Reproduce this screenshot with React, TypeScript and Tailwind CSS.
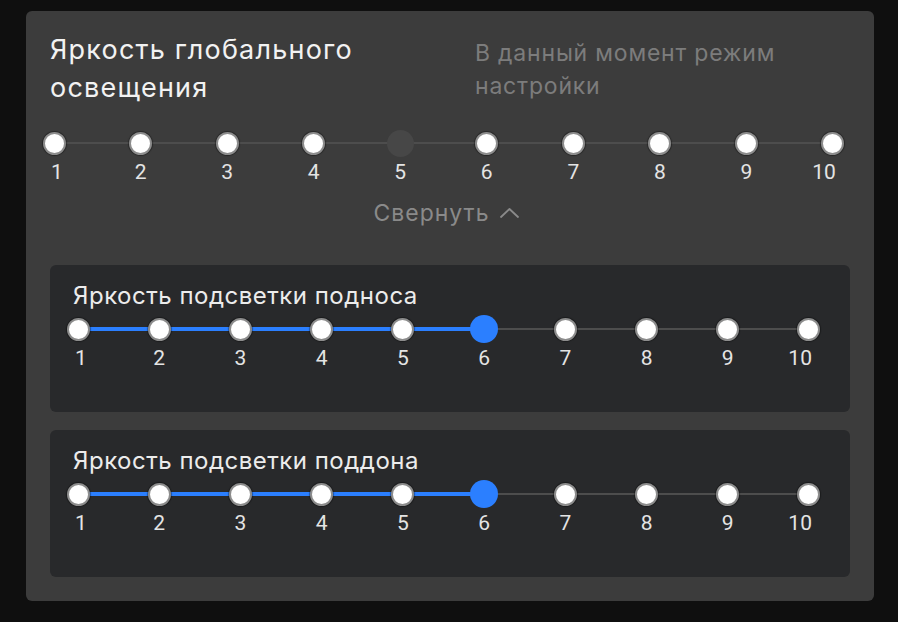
import React from "react";

const marks = [1, 2, 3, 4, 5, 6, 7, 8, 9, 10];

function Dot({ kind }: { kind: "white" | "blue" | "ghost" }) {
  if (kind === "blue")
    return <div className="h-[28px] w-[28px] shrink-0 rounded-full bg-[#2b7fff]" />;
  if (kind === "ghost")
    return <div className="h-[27px] w-[27px] shrink-0 rounded-full bg-[#474747]" />;
  return (
    <div className="h-[23px] w-[23px] shrink-0 rounded-full border-2 border-[#8c8c8c] bg-white shadow-[0_0_1px_1px_rgba(0,0,0,0.35)]" />
  );
}

function Slider({
  value,
  width,
  ml,
  variant,
}: {
  value: number;
  width: string;
  ml: string;
  variant: "top" | "card";
}) {
  const pct = ((value - 1) / 9) * 100;
  return (
    <div className={`${width} ${ml}`}>
      <div className="relative h-[28px]">
        <div className="absolute left-0 right-0 top-1/2 h-[2px] -translate-y-1/2 bg-[#4d4d4d]" />
        {variant === "card" && (
          <div
            className="absolute left-0 top-1/2 h-[4px] -translate-y-1/2 bg-[#2b7fff]"
            style={{ width: `${pct}%` }}
          />
        )}
        <div className="relative flex h-full items-center justify-between">
          {marks.map((m) => (
            <div key={m} className="flex w-0 items-center justify-center">
              <Dot kind={m === value ? (variant === "top" ? "ghost" : "blue") : "white"} />
            </div>
          ))}
        </div>
      </div>
      <div className="mt-[3px] flex justify-between">
        {marks.map((m, i) => (
          <div
            key={m}
            className={`flex w-0 ${i === 0 ? "justify-start" : i === marks.length - 1 ? "justify-end" : "justify-center"}`}
          >
            <span
              className={`whitespace-nowrap font-['Roboto',sans-serif] text-[21px] leading-[24px] text-[#e4e4e4] ${
                i === 0 ? "-ml-[3px]" : i === marks.length - 1 ? "-mr-[3px]" : ""
              }`}
            >
              {m}
            </span>
          </div>
        ))}
      </div>
    </div>
  );
}

function SubCard({ title }: { title: string }) {
  return (
    <div className="h-[147px] rounded-[6px] bg-[#28292b] pl-[23px] pt-[17px]">
      <div className="font-['Inter',sans-serif] text-[24px] leading-[28px] tracking-[0.5px] text-[#ececec]">{title}</div>
      <div className="mt-[5px]">
        <Slider value={6} width="w-[731px]" ml="ml-[5px]" variant="card" />
      </div>
    </div>
  );
}

export default function App() {
  return (
    <div className="min-h-[622px] w-[898px] bg-[#0f0f0f] pt-[11px] pl-[26px]">
      <div className="flex h-[590px] w-[848px] flex-col rounded-[6px] bg-[#3c3c3c] px-[24px] pt-[20px]">
        <div className="flex">
          <div className="w-[425px] font-['Inter',sans-serif] text-[27px] leading-[38px] tracking-[1.2px] text-[#f2f2f2]">
            Яркость глобального
            <br />
            освещения
          </div>
          <div className="mt-[6px] w-[360px] font-['Inter',sans-serif] text-[23px] leading-[33px] tracking-[0.8px] text-[#7c7c7c]">
            В данный момент режим настройки
          </div>
        </div>
        <div className="mt-[22px]">
          <Slider value={5} width="w-[779px]" ml="ml-[4px]" variant="top" />
        </div>
        <div className="mt-[15px] flex items-center justify-center gap-[10px] pr-[8px] font-['Inter',sans-serif] text-[23px] leading-[28px] tracking-[1px] text-[#8a8a8a]">
          <span>Свернуть</span>
          <svg width="19" height="10" viewBox="0 0 19 10" fill="none">
            <polyline points="1,9 9.5,1 18,9" stroke="#8a8a8a" strokeWidth="1.8" strokeLinecap="round" strokeLinejoin="round" />
          </svg>
        </div>
        <div className="mt-[38px] flex flex-col gap-[18px]">
          <SubCard title="Яркость подсветки подноса" />
          <SubCard title="Яркость подсветки поддона" />
        </div>
      </div>
    </div>
  );
}
